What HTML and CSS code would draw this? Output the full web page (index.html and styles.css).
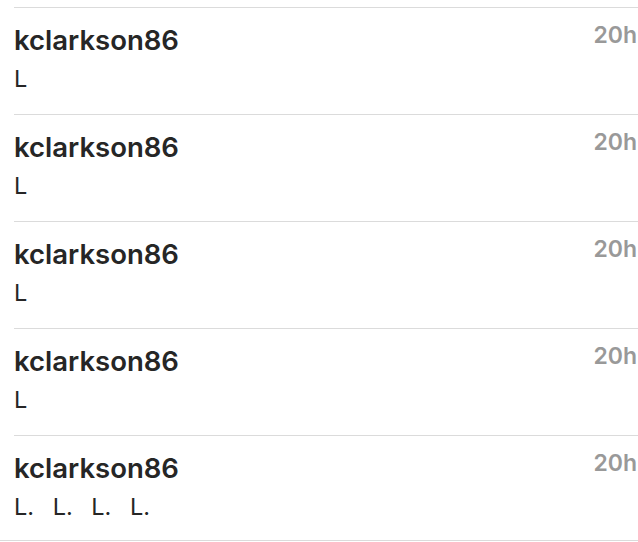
FILE: index.html
```html
<!DOCTYPE html>
<html lang="en">
<head>
  <meta charset="UTF-8">
  <meta name="viewport" content="width=device-width, initial-scale=1.0">
  <title>Comments</title>
  <link rel="stylesheet" href="styles.css">
</head>

<body>
  <div class="comments">
    <div class="comment">
      <div class="body">
        <div class="user">kclarkson86</div>
        <div class="text">L</div>
      </div>
      <div class="time">20h</div>
    </div>

    <div class="comment">
      <div class="body">
        <div class="user">kclarkson86</div>
        <div class="text">L</div>
      </div>
      <div class="time">20h</div>
    </div>

    <div class="comment">
      <div class="body">
        <div class="user">kclarkson86</div>
        <div class="text">L</div>
      </div>
      <div class="time">20h</div>
    </div>

    <div class="comment">
      <div class="body">
        <div class="user">kclarkson86</div>
        <div class="text">L</div>
      </div>
      <div class="time">20h</div>
    </div>

    <div class="comment last">
      <div class="body">
        <div class="user">kclarkson86</div>
        <div class="text">L. L. L. L.</div>
      </div>
      <div class="time">20h</div>
    </div>
  </div>
  <div class="bottomLine"></div>
</body>
</html>
```

FILE: styles.css
```css
body {
  margin: 0;
  background: #ffffff;
  font-family: "Inter", "Liberation Sans", sans-serif;
  color: #262626;
  overflow: hidden;
}

.comments {
  padding-top: 7px;
}

.comment {
  display: flex;
  justify-content: space-between;
  align-items: flex-start;
  margin-left: 14px;
  height: 106px;
  border-top: 1px solid #dbdbdb;
}

.comment.last {
  height: 104px;
}

.body {
  padding-top: 15px;
}

.user {
  font-size: 27.5px;
  font-weight: 600;
  line-height: 34px;
}

.text {
  margin-top: 7px;
  font-size: 23.5px;
  font-weight: 400;
  line-height: 30px;
  white-space: nowrap;
  word-spacing: 12px;
}

.time {
  padding-top: 13px;
  padding-right: 1px;
  font-size: 23px;
  font-weight: 600;
  line-height: 28px;
  color: #999999;
}

.bottomLine {
  border-top: 1px solid #dbdbdb;
}
```
